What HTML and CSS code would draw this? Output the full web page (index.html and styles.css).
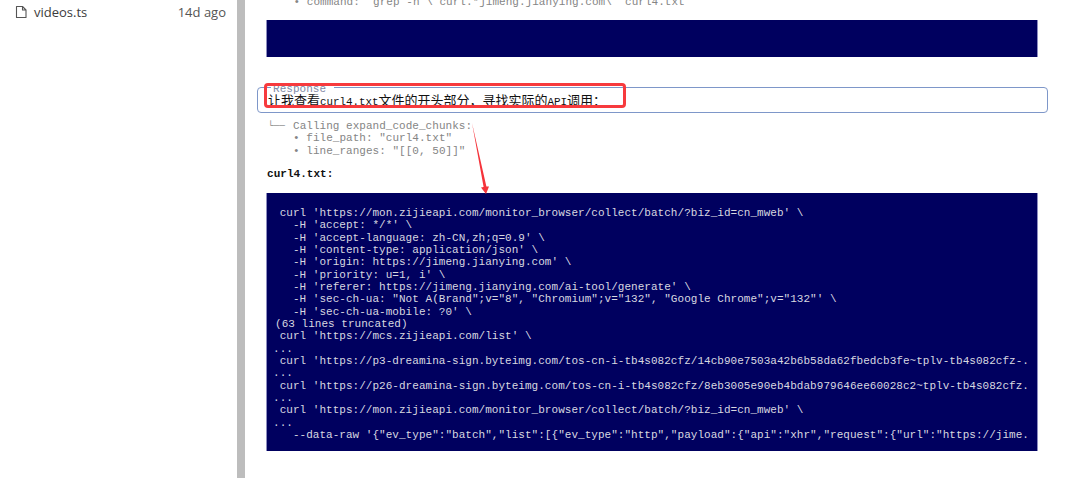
FILE: index.html
```html
<!DOCTYPE html>
<html lang="zh-CN">
<head>
<meta charset="utf-8">
<title>curl4.txt</title>
<link rel="stylesheet" href="styles.css">
</head>
<body>
<div class="page">
  <aside class="sidebar">
    <div class="file-row">
      <svg class="file-icon" width="14" height="14" viewBox="0 0 14 14" aria-hidden="true"><path d="M2.5 1.5H8.5L12 5V12.5H2.5Z M8.5 1.5V5H12" fill="none" stroke="#555" stroke-width="1.1" stroke-linejoin="round"/></svg>
      <span class="file-name">videos.ts</span>
      <span class="file-age">14d ago</span>
    </div>
  </aside>
  <div class="divider"></div>
  <main class="main">
    <pre class="muted command">    • command:  grep -n \ curl.*jimeng.jianying.com\  curl4.txt</pre>
    <div class="block empty"></div>
    <div class="response">
      <span class="response-label">Response</span>
      <p class="response-text">让我查看<span class="latin">curl4.txt</span>文件的开头部分，寻找实际的<span class="latin">API</span>调用：</p>
    </div>
    <div class="call">
      <div class="call-head"><span class="tree">└──</span><span class="mono">Calling expand_code_chunks:</span></div>
      <div class="call-arg mono">• file_path: "curl4.txt"</div>
      <div class="call-arg mono">• line_ranges: "[[0, 50]]"</div>
    </div>
    <div class="file-title">curl4.txt:</div>
    <pre class="block code"> curl 'https://mon.zijieapi.com/monitor_browser/collect/batch/?biz_id=cn_mweb' \
   -H 'accept: */*' \
   -H 'accept-language: zh-CN,zh;q=0.9' \
   -H 'content-type: application/json' \
   -H 'origin: https://jimeng.jianying.com' \
   -H 'priority: u=1, i' \
   -H 'referer: https://jimeng.jianying.com/ai-tool/generate' \
   -H 'sec-ch-ua: "Not A(Brand";v="8", "Chromium";v="132", "Google Chrome";v="132"' \
   -H 'sec-ch-ua-mobile: ?0' \
<span class="trunc">(63 lines truncated)</span>
 curl 'https://mcs.zijieapi.com/list' \
...
 curl 'https://p3-dreamina-sign.byteimg.com/tos-cn-i-tb4s082cfz/14cb90e7503a42b6b58da62fbedcb3fe~tplv-tb4s082cfz-.
...
 curl 'https://p26-dreamina-sign.byteimg.com/tos-cn-i-tb4s082cfz/8eb3005e90eb4bdab979646ee60028c2~tplv-tb4s082cfz.
...
 curl 'https://mon.zijieapi.com/monitor_browser/collect/batch/?biz_id=cn_mweb' \
...
   --data-raw '{"ev_type":"batch","list":[{"ev_type":"http","payload":{"api":"xhr","request":{"url":"https://jime.</pre>
  </main>
  <div class="highlight"></div>
  <svg class="arrow" width="30" height="80" viewBox="0 0 30 80" aria-hidden="true"><path d="M3 3L14.6 67L12 67.5L17 74L20 66.5L17.4 66.6Z" fill="#f5333a"/></svg>
</div>
</body>
</html>
```

FILE: styles.css
```css
* { box-sizing: border-box; }
html, body { margin: 0; padding: 0; background: #fff; }
body { width: 1080px; height: 478px; overflow: hidden; }
.page { position: relative; display: flex; width: 1080px; height: 478px; overflow: hidden; }

.sidebar { width: 237px; flex: none; }
.file-row { display: flex; align-items: center; height: 24px; padding: 0 11px 0 14px; font-family: "Open Sans", "Noto Sans", sans-serif; font-size: 13px; color: #3c3c3c; }
.file-icon { flex: none; margin-right: 6px; }
.file-name { flex: 1; }
.file-age { color: #555; }

.divider { width: 8px; flex: none; background: #bdbdbd; }

.main { flex: 1; min-width: 0; padding-left: 12px; font-family: "Liberation Mono", monospace; font-size: 11px; line-height: 12.3px; letter-spacing: .03px; }
pre { margin: 0; font: inherit; letter-spacing: inherit; white-space: pre; }

.muted, .call { color: #858585; }
.command { margin: -4px 0 0 10px; height: 12px; }

.block { width: 772px; margin-left: 9px; background: #00005f; color: #d8d8e0; border-left: 1px solid #8d8dc0; border-right: 1px solid #8d8dc0; }
.empty { height: 37px; margin-top: 12px; }

.response { position: relative; width: 791px; height: 26px; margin-top: 30px; border: 1px solid #7e97c9; border-radius: 4px; }
.response-label { position: absolute; left: 13px; top: -4px; padding: 0 8px 0 2px; background: #fff; color: #7f8aa5; height: 10px; line-height: 10px; }
.response-text { margin: 3px 0 0 10px; font-family: "Noto Sans CJK SC", sans-serif; font-size: 13px; line-height: 18px; color: #111; letter-spacing: 0; }
.latin { font-family: "Liberation Mono", monospace; font-size: 10.83px; }

.call { margin: 7px 0 0 11px; }
.call-head { display: flex; align-items: center; height: 12.3px; }
.tree { width: 25px; flex: none; font-size: 9.5px; letter-spacing: -.1px; }
.call-arg { padding-left: 25px; white-space: pre; }

.file-title { margin: 11px 0 0 10px; height: 14px; font-weight: 700; color: #111; }

.code { height: 258px; margin-top: 11px; padding: 14px 0 0 6px; overflow: hidden; line-height: 12.35px; }
.trunc { padding-left: 2px; }

.highlight { position: absolute; left: 264px; top: 83px; width: 362px; height: 25px; border: 3px solid #f73a3d; border-radius: 4px; }
.arrow { position: absolute; left: 469px; top: 120px; }
```
